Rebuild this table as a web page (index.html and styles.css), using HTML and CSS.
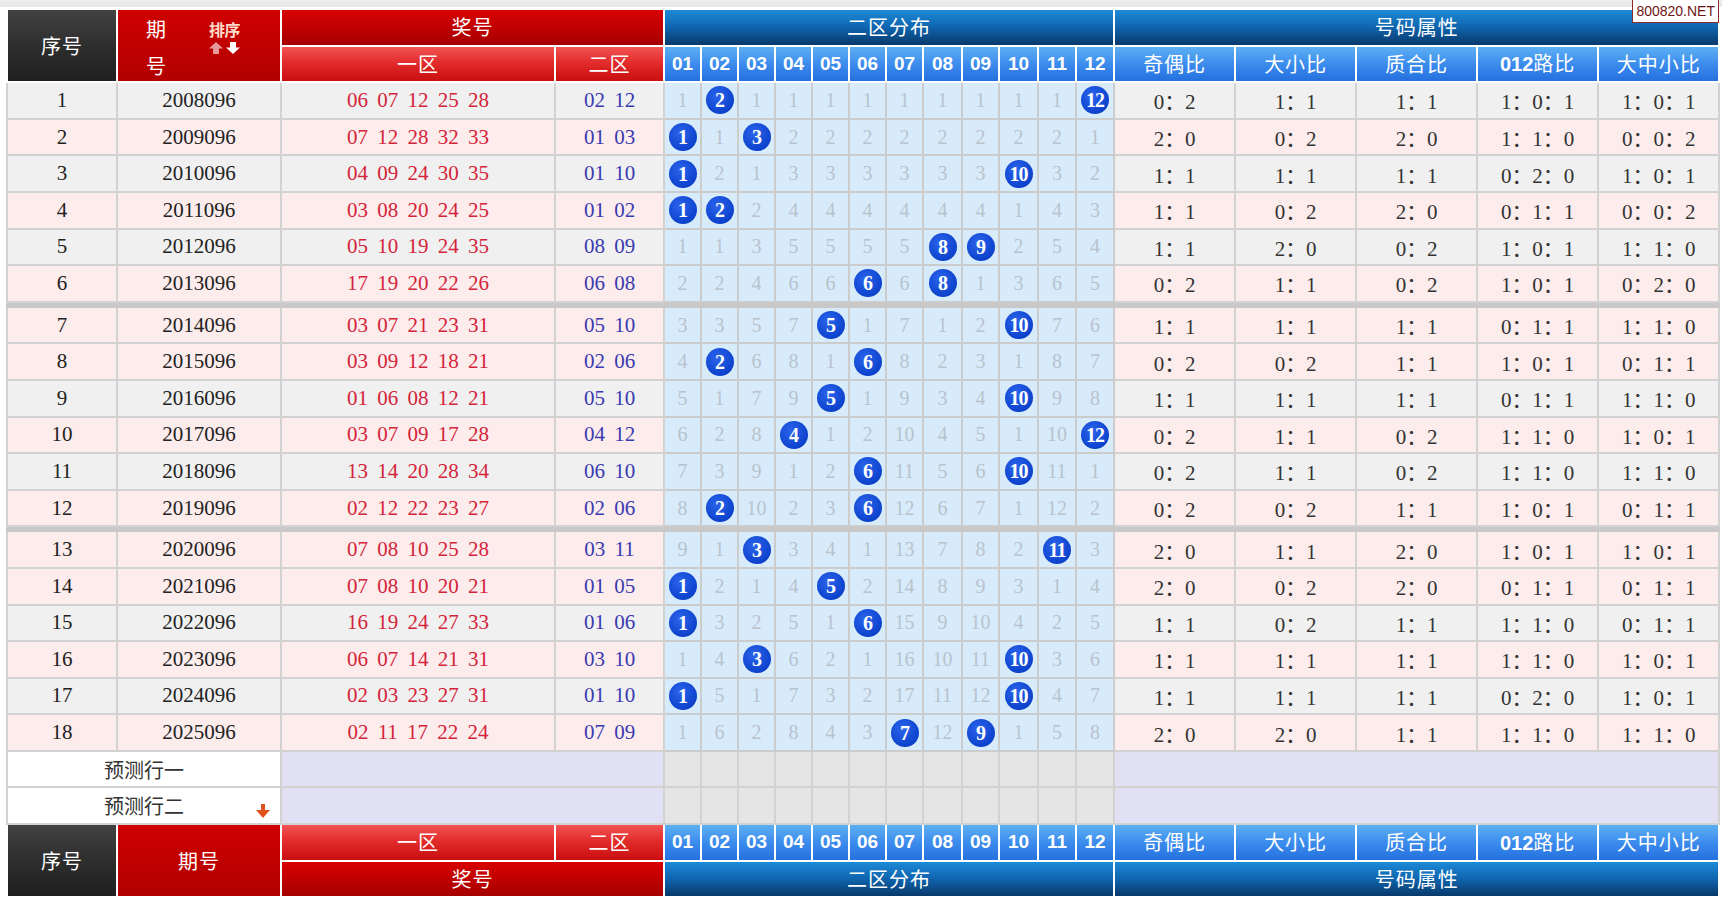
FILE: index.html
```html
<!DOCTYPE html>
<html lang="zh-CN">
<head>
<meta charset="utf-8">
<title>二区分布走势</title>
<link rel="stylesheet" href="styles.css">
</head>
<body>
<div class="badge">800820.NET</div>
<table class="chart">
<colgroup>
<col class="w-seq"><col class="w-per"><col class="w-z1"><col class="w-z2">
<col class="w37"><col class="w37"><col class="w37"><col class="w37"><col class="w37"><col class="w37"><col class="w37"><col class="w39"><col class="w37"><col class="w39"><col class="w38"><col class="w38">
<col class="w-at"><col class="w-at"><col class="w-at"><col class="w-at"><col class="w-at">
</colgroup>
<thead>
<tr class="hr">
<th rowspan="2" class="h-dark">序号</th>
<th rowspan="2" class="h-red qh">
<div class="qh-in">
<div class="qh-col"><span>期</span><span>号</span></div>
<div class="sort"><span class="sort-t">排序</span><span class="sort-a"><svg class="up" width="14" height="12" viewBox="0 0 14 12"><polygon points="7,0 14,6.5 10,6.5 10,12 4,12 4,6.5 0,6.5"/></svg><svg class="down" width="14" height="12" viewBox="0 0 14 12"><polygon points="7,12 14,5.5 10,5.5 10,0 4,0 4,5.5 0,5.5"/></svg></span></div>
</div>
</th>
<th colspan="2" class="h-red2">奖号</th>
<th colspan="12" class="h-blue">二区分布</th>
<th colspan="5" class="h-blue">号码属性</th>
</tr>
<tr class="hr">
<th class="h-lred">一区</th><th class="h-lred">二区</th>
<th class="h-lblue num">01</th><th class="h-lblue num">02</th><th class="h-lblue num">03</th><th class="h-lblue num">04</th><th class="h-lblue num">05</th><th class="h-lblue num">06</th><th class="h-lblue num">07</th><th class="h-lblue num">08</th><th class="h-lblue num">09</th><th class="h-lblue num">10</th><th class="h-lblue num">11</th><th class="h-lblue num">12</th>
<th class="h-lblue">奇偶比</th><th class="h-lblue">大小比</th><th class="h-lblue">质合比</th><th class="h-lblue"><span class="lat">012</span>路比</th><th class="h-lblue">大中小比</th>
</tr>
</thead>
<tbody>
<tr class="g"><td class="sq">1</td><td class="pd">2008096</td><td class="rd">06 07 12 25 28</td><td class="bl">02 12</td><td class="d">1</td><td class="d"><b class="ball">2</b></td><td class="d">1</td><td class="d">1</td><td class="d">1</td><td class="d">1</td><td class="d">1</td><td class="d">1</td><td class="d">1</td><td class="d">1</td><td class="d">1</td><td class="d"><b class="ball">12</b></td><td class="at">0：2</td><td class="at">1：1</td><td class="at">1：1</td><td class="at">1：0：1</td><td class="at">1：0：1</td></tr>
<tr class="k"><td class="sq">2</td><td class="pd">2009096</td><td class="rd">07 12 28 32 33</td><td class="bl">01 03</td><td class="d"><b class="ball">1</b></td><td class="d">1</td><td class="d"><b class="ball">3</b></td><td class="d">2</td><td class="d">2</td><td class="d">2</td><td class="d">2</td><td class="d">2</td><td class="d">2</td><td class="d">2</td><td class="d">2</td><td class="d">1</td><td class="at">2：0</td><td class="at">0：2</td><td class="at">2：0</td><td class="at">1：1：0</td><td class="at">0：0：2</td></tr>
<tr class="g"><td class="sq">3</td><td class="pd">2010096</td><td class="rd">04 09 24 30 35</td><td class="bl">01 10</td><td class="d"><b class="ball">1</b></td><td class="d">2</td><td class="d">1</td><td class="d">3</td><td class="d">3</td><td class="d">3</td><td class="d">3</td><td class="d">3</td><td class="d">3</td><td class="d"><b class="ball">10</b></td><td class="d">3</td><td class="d">2</td><td class="at">1：1</td><td class="at">1：1</td><td class="at">1：1</td><td class="at">0：2：0</td><td class="at">1：0：1</td></tr>
<tr class="k"><td class="sq">4</td><td class="pd">2011096</td><td class="rd">03 08 20 24 25</td><td class="bl">01 02</td><td class="d"><b class="ball">1</b></td><td class="d"><b class="ball">2</b></td><td class="d">2</td><td class="d">4</td><td class="d">4</td><td class="d">4</td><td class="d">4</td><td class="d">4</td><td class="d">4</td><td class="d">1</td><td class="d">4</td><td class="d">3</td><td class="at">1：1</td><td class="at">0：2</td><td class="at">2：0</td><td class="at">0：1：1</td><td class="at">0：0：2</td></tr>
<tr class="g"><td class="sq">5</td><td class="pd">2012096</td><td class="rd">05 10 19 24 35</td><td class="bl">08 09</td><td class="d">1</td><td class="d">1</td><td class="d">3</td><td class="d">5</td><td class="d">5</td><td class="d">5</td><td class="d">5</td><td class="d"><b class="ball">8</b></td><td class="d"><b class="ball">9</b></td><td class="d">2</td><td class="d">5</td><td class="d">4</td><td class="at">1：1</td><td class="at">2：0</td><td class="at">0：2</td><td class="at">1：0：1</td><td class="at">1：1：0</td></tr>
<tr class="k"><td class="sq">6</td><td class="pd">2013096</td><td class="rd">17 19 20 22 26</td><td class="bl">06 08</td><td class="d">2</td><td class="d">2</td><td class="d">4</td><td class="d">6</td><td class="d">6</td><td class="d"><b class="ball">6</b></td><td class="d">6</td><td class="d"><b class="ball">8</b></td><td class="d">1</td><td class="d">3</td><td class="d">6</td><td class="d">5</td><td class="at">0：2</td><td class="at">1：1</td><td class="at">0：2</td><td class="at">1：0：1</td><td class="at">0：2：0</td></tr>
<tr class="sep"><td colspan="21"></td></tr>
<tr class="k"><td class="sq">7</td><td class="pd">2014096</td><td class="rd">03 07 21 23 31</td><td class="bl">05 10</td><td class="d">3</td><td class="d">3</td><td class="d">5</td><td class="d">7</td><td class="d"><b class="ball">5</b></td><td class="d">1</td><td class="d">7</td><td class="d">1</td><td class="d">2</td><td class="d"><b class="ball">10</b></td><td class="d">7</td><td class="d">6</td><td class="at">1：1</td><td class="at">1：1</td><td class="at">1：1</td><td class="at">0：1：1</td><td class="at">1：1：0</td></tr>
<tr class="k"><td class="sq">8</td><td class="pd">2015096</td><td class="rd">03 09 12 18 21</td><td class="bl">02 06</td><td class="d">4</td><td class="d"><b class="ball">2</b></td><td class="d">6</td><td class="d">8</td><td class="d">1</td><td class="d"><b class="ball">6</b></td><td class="d">8</td><td class="d">2</td><td class="d">3</td><td class="d">1</td><td class="d">8</td><td class="d">7</td><td class="at">0：2</td><td class="at">0：2</td><td class="at">1：1</td><td class="at">1：0：1</td><td class="at">0：1：1</td></tr>
<tr class="g"><td class="sq">9</td><td class="pd">2016096</td><td class="rd">01 06 08 12 21</td><td class="bl">05 10</td><td class="d">5</td><td class="d">1</td><td class="d">7</td><td class="d">9</td><td class="d"><b class="ball">5</b></td><td class="d">1</td><td class="d">9</td><td class="d">3</td><td class="d">4</td><td class="d"><b class="ball">10</b></td><td class="d">9</td><td class="d">8</td><td class="at">1：1</td><td class="at">1：1</td><td class="at">1：1</td><td class="at">0：1：1</td><td class="at">1：1：0</td></tr>
<tr class="k"><td class="sq">10</td><td class="pd">2017096</td><td class="rd">03 07 09 17 28</td><td class="bl">04 12</td><td class="d">6</td><td class="d">2</td><td class="d">8</td><td class="d"><b class="ball">4</b></td><td class="d">1</td><td class="d">2</td><td class="d">10</td><td class="d">4</td><td class="d">5</td><td class="d">1</td><td class="d">10</td><td class="d"><b class="ball">12</b></td><td class="at">0：2</td><td class="at">1：1</td><td class="at">0：2</td><td class="at">1：1：0</td><td class="at">1：0：1</td></tr>
<tr class="g"><td class="sq">11</td><td class="pd">2018096</td><td class="rd">13 14 20 28 34</td><td class="bl">06 10</td><td class="d">7</td><td class="d">3</td><td class="d">9</td><td class="d">1</td><td class="d">2</td><td class="d"><b class="ball">6</b></td><td class="d">11</td><td class="d">5</td><td class="d">6</td><td class="d"><b class="ball">10</b></td><td class="d">11</td><td class="d">1</td><td class="at">0：2</td><td class="at">1：1</td><td class="at">0：2</td><td class="at">1：1：0</td><td class="at">1：1：0</td></tr>
<tr class="k"><td class="sq">12</td><td class="pd">2019096</td><td class="rd">02 12 22 23 27</td><td class="bl">02 06</td><td class="d">8</td><td class="d"><b class="ball">2</b></td><td class="d">10</td><td class="d">2</td><td class="d">3</td><td class="d"><b class="ball">6</b></td><td class="d">12</td><td class="d">6</td><td class="d">7</td><td class="d">1</td><td class="d">12</td><td class="d">2</td><td class="at">0：2</td><td class="at">0：2</td><td class="at">1：1</td><td class="at">1：0：1</td><td class="at">0：1：1</td></tr>
<tr class="sep"><td colspan="21"></td></tr>
<tr class="k"><td class="sq">13</td><td class="pd">2020096</td><td class="rd">07 08 10 25 28</td><td class="bl">03 11</td><td class="d">9</td><td class="d">1</td><td class="d"><b class="ball">3</b></td><td class="d">3</td><td class="d">4</td><td class="d">1</td><td class="d">13</td><td class="d">7</td><td class="d">8</td><td class="d">2</td><td class="d"><b class="ball">11</b></td><td class="d">3</td><td class="at">2：0</td><td class="at">1：1</td><td class="at">2：0</td><td class="at">1：0：1</td><td class="at">1：0：1</td></tr>
<tr class="k"><td class="sq">14</td><td class="pd">2021096</td><td class="rd">07 08 10 20 21</td><td class="bl">01 05</td><td class="d"><b class="ball">1</b></td><td class="d">2</td><td class="d">1</td><td class="d">4</td><td class="d"><b class="ball">5</b></td><td class="d">2</td><td class="d">14</td><td class="d">8</td><td class="d">9</td><td class="d">3</td><td class="d">1</td><td class="d">4</td><td class="at">2：0</td><td class="at">0：2</td><td class="at">2：0</td><td class="at">0：1：1</td><td class="at">0：1：1</td></tr>
<tr class="g"><td class="sq">15</td><td class="pd">2022096</td><td class="rd">16 19 24 27 33</td><td class="bl">01 06</td><td class="d"><b class="ball">1</b></td><td class="d">3</td><td class="d">2</td><td class="d">5</td><td class="d">1</td><td class="d"><b class="ball">6</b></td><td class="d">15</td><td class="d">9</td><td class="d">10</td><td class="d">4</td><td class="d">2</td><td class="d">5</td><td class="at">1：1</td><td class="at">0：2</td><td class="at">1：1</td><td class="at">1：1：0</td><td class="at">0：1：1</td></tr>
<tr class="k"><td class="sq">16</td><td class="pd">2023096</td><td class="rd">06 07 14 21 31</td><td class="bl">03 10</td><td class="d">1</td><td class="d">4</td><td class="d"><b class="ball">3</b></td><td class="d">6</td><td class="d">2</td><td class="d">1</td><td class="d">16</td><td class="d">10</td><td class="d">11</td><td class="d"><b class="ball">10</b></td><td class="d">3</td><td class="d">6</td><td class="at">1：1</td><td class="at">1：1</td><td class="at">1：1</td><td class="at">1：1：0</td><td class="at">1：0：1</td></tr>
<tr class="g"><td class="sq">17</td><td class="pd">2024096</td><td class="rd">02 03 23 27 31</td><td class="bl">01 10</td><td class="d"><b class="ball">1</b></td><td class="d">5</td><td class="d">1</td><td class="d">7</td><td class="d">3</td><td class="d">2</td><td class="d">17</td><td class="d">11</td><td class="d">12</td><td class="d"><b class="ball">10</b></td><td class="d">4</td><td class="d">7</td><td class="at">1：1</td><td class="at">1：1</td><td class="at">1：1</td><td class="at">0：2：0</td><td class="at">1：0：1</td></tr>
<tr class="k"><td class="sq">18</td><td class="pd">2025096</td><td class="rd">02 11 17 22 24</td><td class="bl">07 09</td><td class="d">1</td><td class="d">6</td><td class="d">2</td><td class="d">8</td><td class="d">4</td><td class="d">3</td><td class="d"><b class="ball">7</b></td><td class="d">12</td><td class="d"><b class="ball">9</b></td><td class="d">1</td><td class="d">5</td><td class="d">8</td><td class="at">2：0</td><td class="at">2：0</td><td class="at">1：1</td><td class="at">1：1：0</td><td class="at">1：1：0</td></tr>
<tr class="pr"><td colspan="2" class="pl">预测行一</td><td colspan="2" class="lav"></td><td class="gc"></td><td class="gc"></td><td class="gc"></td><td class="gc"></td><td class="gc"></td><td class="gc"></td><td class="gc"></td><td class="gc"></td><td class="gc"></td><td class="gc"></td><td class="gc"></td><td class="gc"></td><td colspan="5" class="lav"></td></tr>
<tr class="pr"><td colspan="2" class="pl">预测行二<svg class="pred-arrow" width="14" height="14" viewBox="0 0 14 14"><polygon points="5,0 9,0 9,6 14,6 7,14 0,6 5,6"/></svg></td><td colspan="2" class="lav"></td><td class="gc"></td><td class="gc"></td><td class="gc"></td><td class="gc"></td><td class="gc"></td><td class="gc"></td><td class="gc"></td><td class="gc"></td><td class="gc"></td><td class="gc"></td><td class="gc"></td><td class="gc"></td><td colspan="5" class="lav"></td></tr>
</tbody>
<tfoot>
<tr class="hr">
<th rowspan="2" class="h-dark">序号</th>
<th rowspan="2" class="h-red">期号</th>
<th class="h-lred">一区</th><th class="h-lred">二区</th>
<th class="h-lblue num">01</th><th class="h-lblue num">02</th><th class="h-lblue num">03</th><th class="h-lblue num">04</th><th class="h-lblue num">05</th><th class="h-lblue num">06</th><th class="h-lblue num">07</th><th class="h-lblue num">08</th><th class="h-lblue num">09</th><th class="h-lblue num">10</th><th class="h-lblue num">11</th><th class="h-lblue num">12</th>
<th class="h-lblue">奇偶比</th><th class="h-lblue">大小比</th><th class="h-lblue">质合比</th><th class="h-lblue"><span class="lat">012</span>路比</th><th class="h-lblue">大中小比</th>
</tr>
<tr class="hr">
<th colspan="2" class="h-red2">奖号</th>
<th colspan="12" class="h-blue">二区分布</th>
<th colspan="5" class="h-blue">号码属性</th>
</tr>
</tfoot>
</table>
</body>
</html>
```
FILE: styles.css
```css
html, body {
  margin: 0;
  padding: 0;
}
body {
  background: #fff linear-gradient(#ececec, #e8e8e8) no-repeat 0 0 / 100% 7px;
  padding: 8px 5px 0 6px;
  font-family: "Liberation Serif", "Noto Sans CJK SC", serif;
  position: relative;
}
.badge {
  position: absolute;
  top: 0;
  right: 3px;
  z-index: 2;
  height: 22px;
  padding: 0 3px;
  background: #fff;
  border: 1px solid #8c2a2a;
  border-top: 0;
  color: #6e1616;
  font-family: "Liberation Sans", "DejaVu Sans", sans-serif;
  font-size: 14px;
  line-height: 22px;
  letter-spacing: 0;
}
.chart {
  border-collapse: collapse;
  table-layout: fixed;
  width: 1711px;
}
.w-seq { width: 110px; }
.w-per { width: 164px; }
.w-z1 { width: 274px; }
.w-z2 { width: 109px; }
.w37 { width: 37px; }
.w38 { width: 38px; }
.w39 { width: 39px; }
.w-at { width: 121px; }

.chart td, .chart th {
  border: 2px solid #d2d2d2;
  padding: 0;
  text-align: center;
  white-space: nowrap;
  overflow: hidden;
}
.chart tr { height: 36.6px; }
.chart th {
  border-color: #fff;
  color: #fff;
  font-weight: normal;
  font-family: "Noto Sans CJK SC", sans-serif;
  font-size: 20px;
  line-height: 26px;
  letter-spacing: 1px;
}
.h-dark { background: linear-gradient(#424242, #2e2e2e 50%, #1f1f1f); font-size: 21px; }
.h-red { background: linear-gradient(#cf0000, #bd0000 60%, #b20000); font-size: 21px; }
.h-red2 { background: linear-gradient(#d80202, #c00000 50%, #a40000); }
.h-lred { background: linear-gradient(#f25454, #e32c2c 45%, #c90f0f); }
.h-blue { background: linear-gradient(#1d8ad8, #0f64ad 50%, #08396a); }
.h-lblue { background: linear-gradient(#5db0f4, #3c8ced 50%, #2470df); }
.h-lblue.num {
  font-family: "Liberation Sans", Arial, sans-serif;
  font-weight: bold;
  font-size: 19px;
  letter-spacing: 0;
}
.lat {
  font-family: "Liberation Sans", Arial, sans-serif;
  font-weight: bold;
  letter-spacing: 0;
}

/* 期号 header */
.qh-in {
  display: flex;
  justify-content: center;
  align-items: flex-start;
  gap: 42px;
  padding-right: 12px;
  height: 70px;
}
.qh-col {
  display: flex;
  flex-direction: column;
  gap: 9px;
  margin-top: 4px;
  line-height: 28px;
}
.sort {
  display: flex;
  flex-direction: column;
  align-items: center;
  gap: 4px;
  margin-top: 10px;
}
.sort-t {
  font-size: 16px;
  font-weight: bold;
  line-height: 17px;
  letter-spacing: -0.5px;
  color: #ffd9c9;
}
.sort-a {
  display: flex;
  gap: 3px;
}
.sort-a svg { display: block; }
.sort-a .up { fill: #e49a9a; }
.sort-a .down { fill: #fff; }

/* data rows */
.chart tr.g td { background: #f0f0f0; }
.chart tr.k td { background: #fcecec; }
.chart td {
  font-size: 21px;
  color: #222;
}
.chart td.rd { color: #d4243a; word-spacing: 4px; }
.chart td.bl { color: #3a3ab0; word-spacing: 4px; }
.chart td.at { color: #333; }
.chart tr.g td.d, .chart tr.k td.d {
  background: #d7ebfb;
  color: #b9c3cd;
  font-size: 20px;
}
.chart td.d { border-color: #cccccc; }
.ball {
  display: inline-flex;
  align-items: center;
  justify-content: center;
  width: 28px;
  height: 28px;
  border-radius: 50%;
  background: radial-gradient(circle at 40% 35%, #2c64ec, #0c42cc 70%, #0a3ab8);
  color: #fff;
  font-weight: bold;
  font-size: 20px;
  line-height: 28px;
  vertical-align: middle;
  letter-spacing: -1px;
}

.chart tr.sep { height: 5px; }
.chart tr.sep td {
  height: 1px;
  background: #c8c8c8;
  border-color: #c8c8c8;
  line-height: 0;
  font-size: 0;
}

/* prediction rows */
.chart td.pl {
  background: #fff;
  color: #333;
  font-family: "Noto Sans CJK SC", sans-serif;
  font-size: 20px;
  position: relative;
}
.chart td.lav { background: #e1e1f3; }
.chart td.gc { background: #e5e5e5; }
.pred-arrow {
  position: absolute;
  right: 10px;
  bottom: 5px;
  fill: #e2521c;
}
```
